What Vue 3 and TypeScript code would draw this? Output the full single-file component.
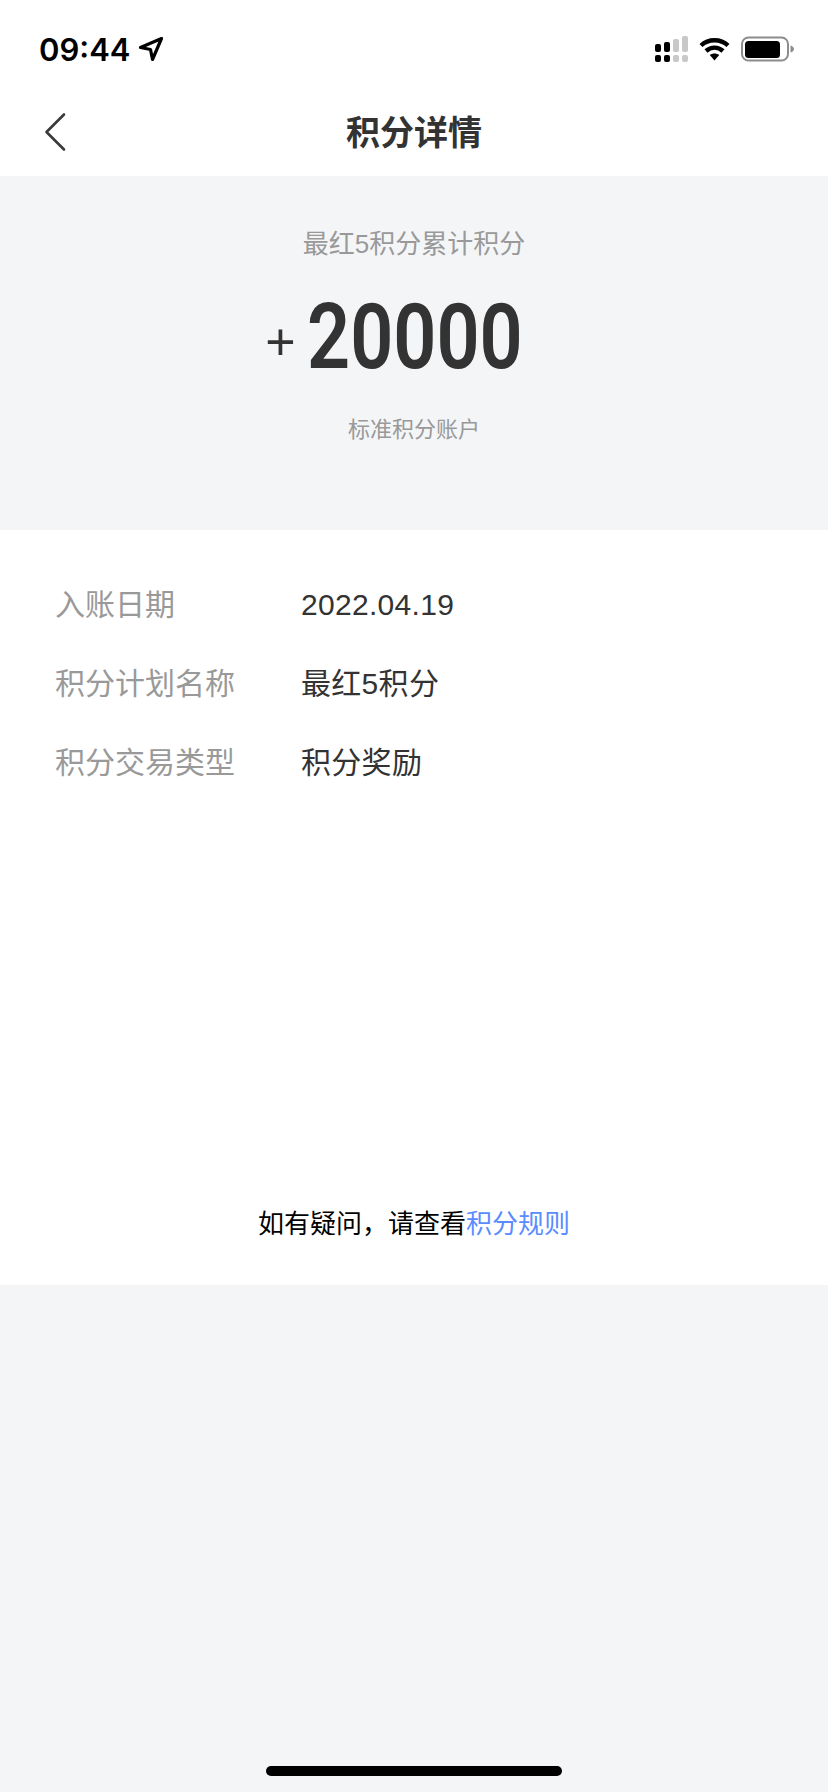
<script setup lang="ts">
interface Row {
  label: string
  value: string
}

const rows: Row[] = [
  { label: '入账日期', value: '2022.04.19' },
  { label: '积分计划名称', value: '最红5积分' },
  { label: '积分交易类型', value: '积分奖励' },
]
</script>

<template>
  <div class="page">
    <header class="status">
      <div class="time">
        <span>09:44</span>
        <svg class="arrow" width="26" height="26" viewBox="0 0 26 26">
          <path d="M23.5 2.5 L2.5 11.5 L12.5 13.5 L14.5 23.5 Z" fill="none" stroke="#000" stroke-width="3.2" stroke-linejoin="round" />
        </svg>
      </div>
      <div class="status-icons">
        <svg width="33" height="26" viewBox="0 0 33 26">
          <rect x="0" y="8" width="6" height="8" rx="2" fill="#000" />
          <rect x="0" y="19" width="6" height="7" rx="2" fill="#000" />
          <rect x="9" y="6" width="6" height="10" rx="2" fill="#000" />
          <rect x="9" y="19" width="6" height="7" rx="2" fill="#000" />
          <rect x="18" y="3" width="6" height="13" rx="2" fill="#c8c8c8" />
          <rect x="18" y="19" width="6" height="7" rx="2" fill="#c8c8c8" />
          <rect x="27" y="0" width="6" height="16" rx="2" fill="#c8c8c8" />
          <rect x="27" y="19" width="6" height="7" rx="2" fill="#c8c8c8" />
        </svg>
        <svg class="wifi" width="31" height="24" viewBox="0 0 31 24">
          <path d="M2 8.5 C9.5 1.5 21.5 1.5 29 8.5" fill="none" stroke="#000" stroke-width="4.4" />
          <path d="M7 14 C12 9.5 19 9.5 24 14" fill="none" stroke="#000" stroke-width="4.4" />
          <path d="M10.8 18 C13.5 16 17.5 16 20.2 18 L15.5 23.5 Z" fill="#000" />
        </svg>
        <svg class="battery" width="53" height="26" viewBox="0 0 53 26">
          <rect x="1" y="1.5" width="46" height="23" rx="6.5" fill="none" stroke="#8c8c8c" stroke-width="2" />
          <rect x="4" y="5" width="35" height="17" rx="3.5" fill="#000" />
          <path d="M49.5 9.5 C51.5 10 53 11.5 53 13 C53 14.5 51.5 16 49.5 16.5 Z" fill="#8c8c8c" />
        </svg>
      </div>
    </header>

    <nav class="nav">
      <svg class="back" width="24" height="40" viewBox="0 0 24 40">
        <path d="M21 2.5 L3.5 20 L21 37.5" fill="none" stroke="#3a3a3a" stroke-width="2.6" stroke-linecap="round" stroke-linejoin="round" />
      </svg>
      <h1 class="title">积分详情</h1>
    </nav>

    <section class="hero">
      <p class="hero-label">最红5积分累计积分</p>
      <div class="amount">
        <span class="plus">+</span>
        <span class="number">20000</span>
      </div>
      <p class="hero-account">标准积分账户</p>
    </section>

    <main class="detail">
      <div class="rows">
        <div v-for="row in rows" :key="row.label" class="row">
          <span class="row-label">{{ row.label }}</span>
          <span class="row-value">{{ row.value }}</span>
        </div>
      </div>
      <p class="help">如有疑问，请查看<span class="link">积分规则</span></p>
    </main>

    <div class="rest">
      <div class="home-bar"></div>
    </div>
  </div>
</template>

<style scoped>
.page {
  width: 828px;
  height: 1792px;
  display: flex;
  flex-direction: column;
  background: #f4f5f7;
  font-family: "Liberation Sans", "Noto Sans CJK SC", sans-serif;
  color: #333;
}
.status {
  height: 88px;
  flex: none;
  display: flex;
  align-items: center;
  justify-content: space-between;
  box-sizing: border-box;
  padding: 10px 34px 0 39px;
  background: #fff;
}
.time {
  display: flex;
  align-items: center;
  gap: 8px;
  font-family: Inter, sans-serif;
  font-weight: 600;
  font-size: 31px;
  color: #000;
}
.status-icons {
  display: flex;
  align-items: center;
  gap: 11px;
}
.nav {
  height: 88px;
  flex: none;
  position: relative;
  display: flex;
  align-items: center;
  justify-content: center;
  box-sizing: border-box;
  padding-bottom: 4px;
  background: #fff;
}
.back {
  position: absolute;
  left: 43px;
  top: 24px;
}
.title {
  margin: 0;
  font-size: 34px;
  font-weight: 700;
  color: #333;
}
.hero {
  height: 354px;
  flex: none;
  display: flex;
  flex-direction: column;
  align-items: center;
  padding-top: 46px;
  box-sizing: border-box;
}
.hero-label {
  margin: 0;
  font-size: 26px;
  line-height: 44px;
  color: #999;
}
.amount {
  display: flex;
  align-items: center;
  height: 90px;
  margin-top: 26px;
  padding-right: 39px;
  line-height: 90px;
}
.plus {
  font-size: 52px;
  margin: 10px 11px 0 0;
  color: #333;
}
.number {
  display: inline-block;
  font-family: Roboto, sans-serif;
  font-weight: 600;
  font-size: 91px;
  color: #333;
  transform: scaleX(0.83);
  transform-origin: left center;
  margin-right: -43px;
}
.hero-account {
  margin: 28px 0 0;
  font-size: 22px;
  line-height: 40px;
  color: #999;
}
.detail {
  height: 755px;
  flex: none;
  display: flex;
  flex-direction: column;
  justify-content: space-between;
  box-sizing: border-box;
  padding: 50px 0 37px;
  background: #fff;
}
.rows {
  display: flex;
  flex-direction: column;
  gap: 29px;
}
.row {
  display: grid;
  grid-template-columns: 246px 1fr;
  padding-left: 55px;
  font-size: 30px;
  line-height: 50px;
  letter-spacing: 0.3px;
}
.row-label {
  color: #999;
  letter-spacing: 0;
}
.row-value {
  color: #333;
}
.help {
  margin: 0;
  text-align: center;
  font-size: 26px;
  line-height: 48px;
  color: #000;
}
.link {
  color: #5b8cff;
}
.rest {
  flex: 1;
  display: flex;
  align-items: flex-end;
  justify-content: center;
  padding-bottom: 16px;
}
.home-bar {
  width: 296px;
  height: 10px;
  border-radius: 5px;
  background: #000;
}
</style>
